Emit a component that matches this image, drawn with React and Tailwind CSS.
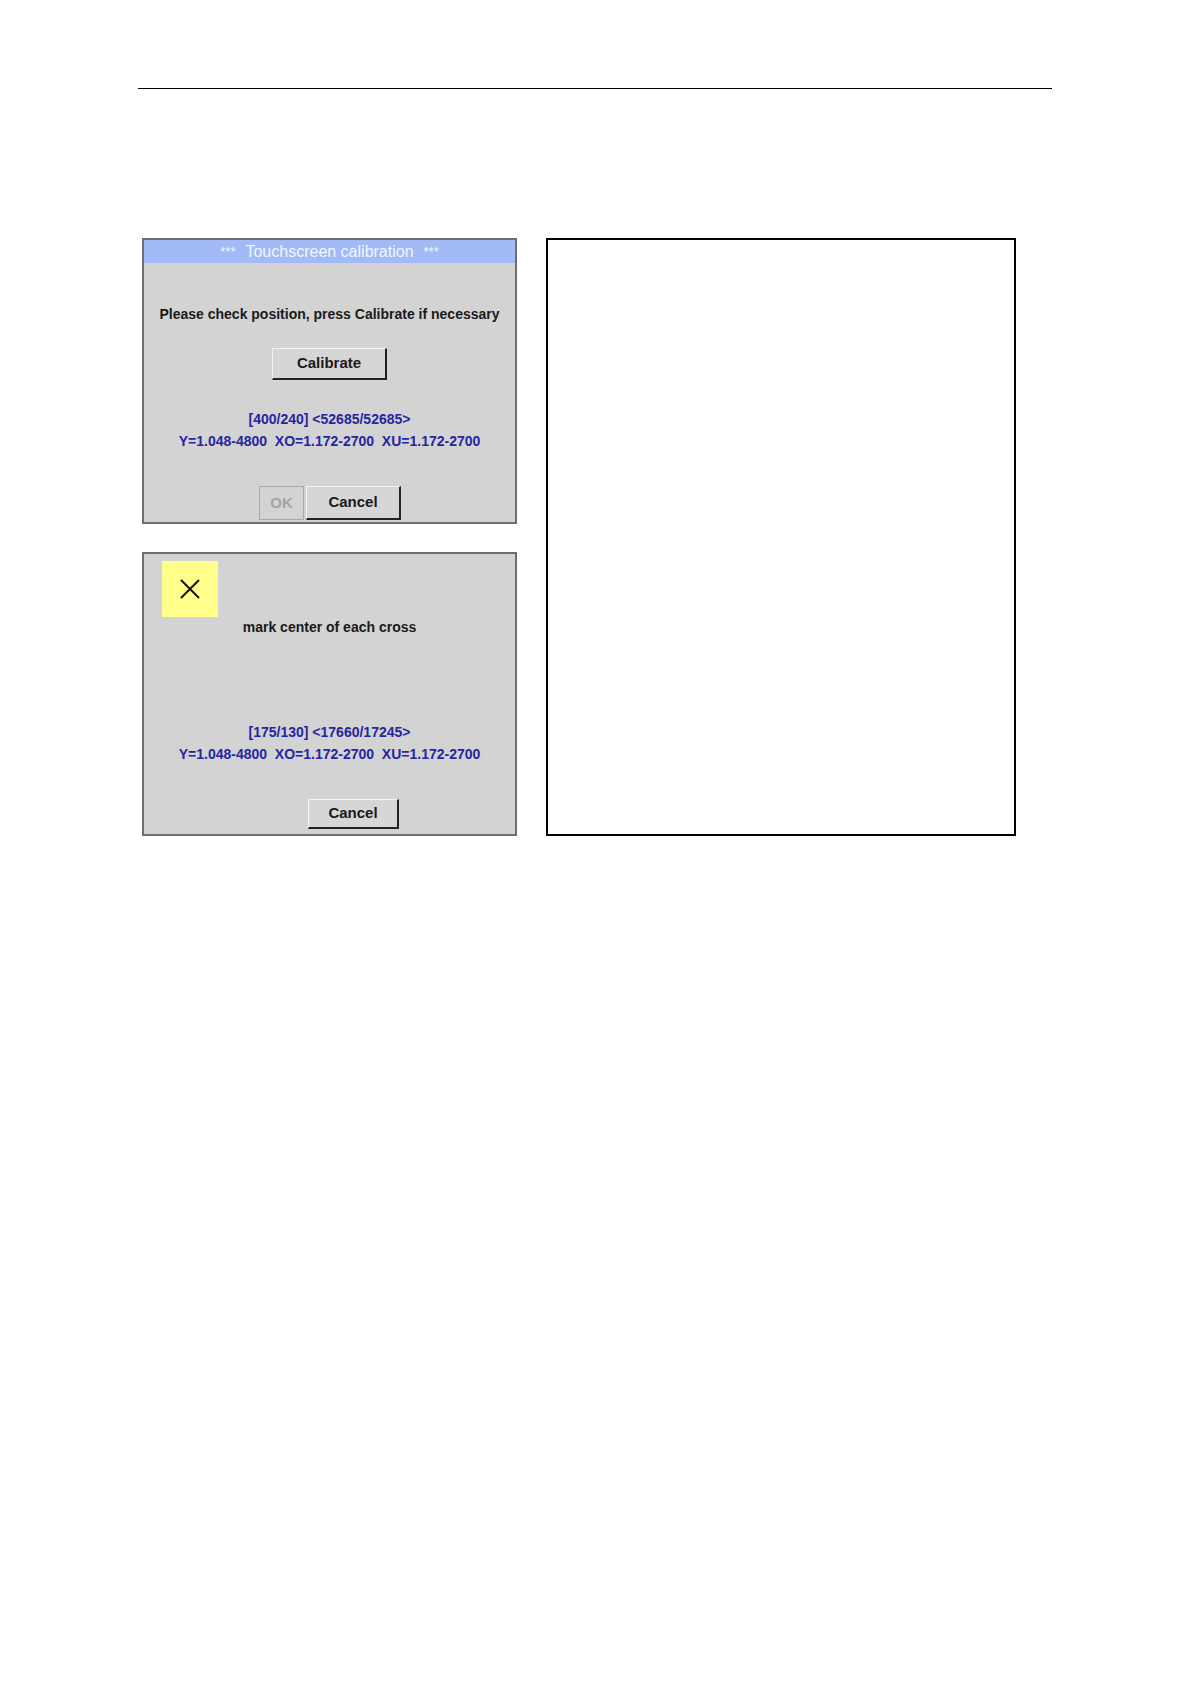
import React from 'react'

const font = { fontFamily: '"Liberation Sans", Arial, sans-serif' }

function Btn({ children, className = '' }) {
    return (
        <div
            className={`flex items-center justify-center bg-[#d6d6d6] border-t border-l border-t-[#f4f4f4] border-l-[#f4f4f4] border-r-2 border-b-2 border-r-[#222] border-b-[#222] text-[15px] font-bold text-[#1a1a1a] ${className}`}>
            {children}
        </div>
    )
}

function BlueLines({ first }) {
    return (
        <div className="flex flex-col items-center text-[14px] font-bold leading-[22px] text-[#2626a0] whitespace-pre">
            <div>{first}</div>
            <div>{'Y=1.048-4800  XO=1.172-2700  XU=1.172-2700'}</div>
        </div>
    )
}

export default function App() {
    return (
        <div className="w-[1191px] min-h-[1684px] bg-white" style={font}>
            <div className="pt-[88px] pl-[138px]">
                <div className="w-[914px] h-px bg-black" />
            </div>

            <div className="flex pl-[142px] mt-[149px]">
                {/* left column, two screenshots of the device */}
                <div className="flex flex-col gap-[28px] w-[375px]">
                    <div className="h-[286px] flex flex-col bg-[#d3d3d3] border-2 border-[#6e6e6e]">
                        <div className="h-[23px] flex items-center justify-center gap-[10px] bg-[#a2baf6] text-[16px] text-[#f4f6ff]">
                            <span className="text-[13px]">***</span>
                            <span>Touchscreen calibration</span>
                            <span className="text-[13px]">***</span>
                        </div>
                        <div className="mt-[43px] text-center text-[14px] leading-[16px] font-bold text-[#1a1a1a]">
                            Please check position, press Calibrate if necessary
                        </div>
                        <div className="flex justify-center mt-[26px]">
                            <Btn className="w-[115px] h-[32px]">Calibrate</Btn>
                        </div>
                        <div className="mt-[28px]">
                            <BlueLines first="[400/240] <52685/52685>" />
                        </div>
                        <div className="flex justify-center gap-[2px] mt-[34px] pl-[1px]">
                            <div className="w-[45px] h-[34px] flex items-center justify-center border border-[#a8a8a8] text-[15px] font-bold text-[#a4a4a4]">
                                OK
                            </div>
                            <Btn className="w-[95px] h-[34px]">Cancel</Btn>
                        </div>
                    </div>

                    <div className="h-[284px] flex flex-col bg-[#d3d3d3] border-2 border-[#6e6e6e]">
                        <div className="ml-[18px] mt-[7px] w-[56px] h-[56px] bg-[#ffff8a] flex items-center justify-center">
                            <svg width="22" height="22" viewBox="0 0 22 22">
                                <path d="M2 2 L20 20 M20 2 L2 20" stroke="#111" strokeWidth="2" fill="none" />
                            </svg>
                        </div>
                        <div className="mt-[2px] text-center text-[14px] leading-[16px] font-bold text-[#1a1a1a]">
                            mark center of each cross
                        </div>
                        <div className="mt-[86px]">
                            <BlueLines first="[175/130] <17660/17245>" />
                        </div>
                        <div className="mt-[34px] ml-[164px]">
                            <Btn className="w-[91px] h-[30px]">Cancel</Btn>
                        </div>
                    </div>
                </div>

                {/* empty frame on the right */}
                <div className="ml-[29px] w-[470px] h-[598px] border-2 border-black" />
            </div>
        </div>
    )
}
